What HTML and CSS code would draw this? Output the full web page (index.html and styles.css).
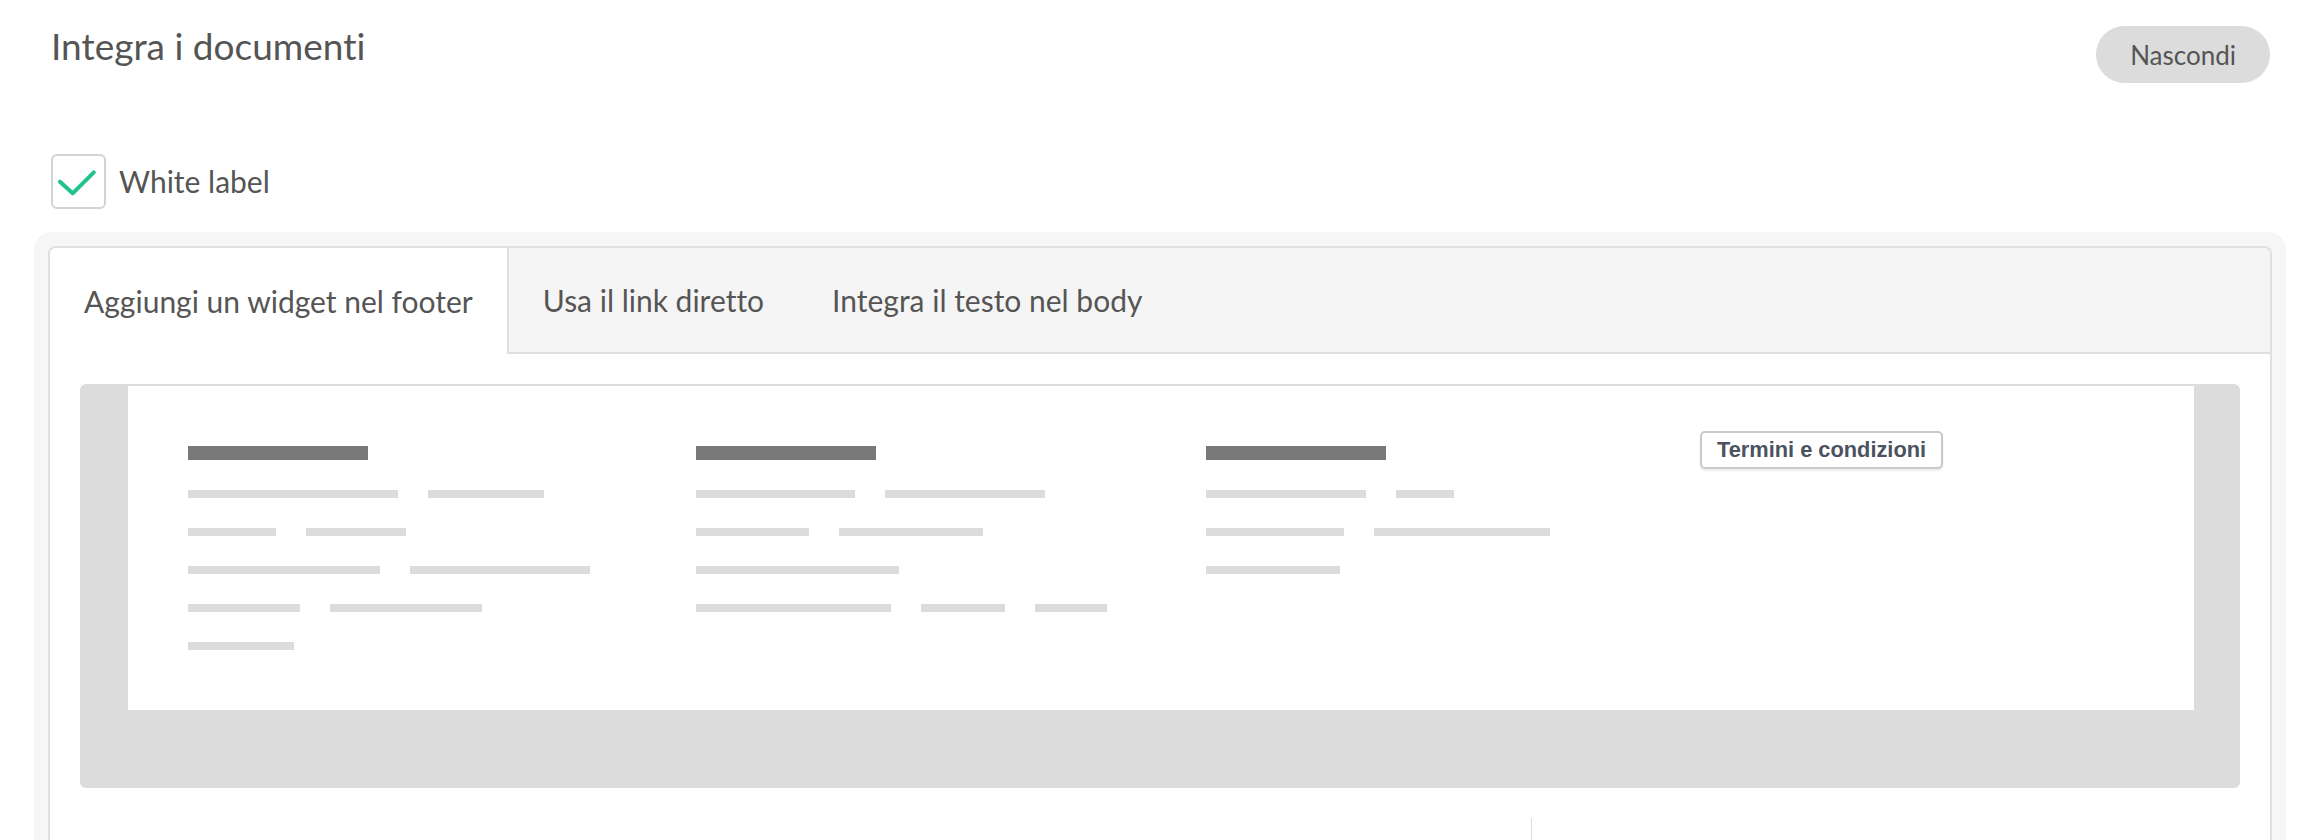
FILE: index.html
```html
<!DOCTYPE html>
<html lang="it">
<head>
<meta charset="utf-8">
<title>Integra i documenti</title>
<link rel="stylesheet" href="styles.css">
</head>
<body>
<div class="page">
  <header class="header">
    <h1 class="title">Integra i documenti</h1>
    <button class="hide-btn">Nascondi</button>
  </header>

  <label class="option">
    <span class="checkbox">
      <svg width="51" height="51" viewBox="0 0 51 51"><polyline points="7,25.7 19.7,37.3 40.8,16.3" fill="none" stroke="#1fc38b" stroke-width="4" stroke-linecap="round" stroke-linejoin="round"/></svg>
    </span>
    <span class="option-label">White label</span>
  </label>

  <section class="panel">
    <div class="card">
      <nav class="tabs">
        <div class="tab active">Aggiungi un widget nel footer</div>
        <div class="tab">Usa il link diretto</div>
        <div class="tab">Integra il testo nel body</div>
      </nav>
      <div class="card-body">
        <div class="preview">
          <div class="site">
            <div class="col">
              <div class="heading-bar"></div>
              <div class="row"><span class="seg" style="width:210px"></span><span class="seg" style="width:116px"></span></div>
              <div class="row"><span class="seg" style="width:88px"></span><span class="seg" style="width:100px"></span></div>
              <div class="row"><span class="seg" style="width:192px"></span><span class="seg" style="width:180px"></span></div>
              <div class="row"><span class="seg" style="width:112px"></span><span class="seg" style="width:152px"></span></div>
              <div class="row"><span class="seg" style="width:106px"></span></div>
            </div>
            <div class="col">
              <div class="heading-bar"></div>
              <div class="row"><span class="seg" style="width:159px"></span><span class="seg" style="width:160px"></span></div>
              <div class="row"><span class="seg" style="width:113px"></span><span class="seg" style="width:144px"></span></div>
              <div class="row"><span class="seg" style="width:203px"></span></div>
              <div class="row"><span class="seg" style="width:195px"></span><span class="seg" style="width:84px"></span><span class="seg" style="width:72px"></span></div>
            </div>
            <div class="col">
              <div class="heading-bar"></div>
              <div class="row"><span class="seg" style="width:160px"></span><span class="seg" style="width:58px"></span></div>
              <div class="row"><span class="seg" style="width:138px"></span><span class="seg" style="width:176px"></span></div>
              <div class="row"><span class="seg" style="width:134px"></span></div>
            </div>
            <div class="col-btn">
              <span class="terms-btn">Termini e condizioni</span>
            </div>
          </div>
        </div>
        <div class="below">
          <div class="below-left"></div>
          <div class="below-right"></div>
        </div>
      </div>
    </div>
  </section>
</div>
</body>
</html>
```
FILE: styles.css
```css
* { box-sizing: border-box; }

html, body {
  margin: 0;
  padding: 0;
  background: #ffffff;
  overflow: hidden;
}

body {
  font-family: "Lato", "Noto Sans", sans-serif;
  font-variant-ligatures: none;
  color: #555555;
}

.page {
  padding: 0 34px;
}

.header {
  display: flex;
  justify-content: space-between;
  align-items: flex-start;
  padding: 23px 16px 0 17px;
}

.title {
  margin: 0;
  font-size: 37px;
  line-height: 46px;
  font-weight: 400;
  color: #555555;
}

.hide-btn {
  margin-top: 3px;
  height: 57px;
  padding: 0 34px;
  border: none;
  border-radius: 29px;
  background: #dcdcdc;
  color: #555555;
  font-family: "Lato", "Noto Sans", sans-serif;
  font-size: 26px;
}

.option {
  display: flex;
  align-items: center;
  gap: 13px;
  margin: 71px 0 0 17px;
}

.checkbox {
  width: 55px;
  height: 55px;
  border: 2px solid #d2d3d9;
  border-radius: 6px;
  background: #fff;
  display: flex;
}

.option-label {
  font-size: 30px;
  color: #555555;
  padding-bottom: 2px;
}

.panel {
  margin-top: 23px;
  background: #f6f6f6;
  border-radius: 18px 18px 0 0;
  padding: 14px 14px 0;
}

.card {
  background: #ffffff;
  border: 2px solid #e0e0e0;
  border-bottom: none;
  border-radius: 8px 8px 0 0;
  min-height: 700px;
}

.tabs {
  display: flex;
  background: #f5f5f5;
  border-bottom: 2px solid #e0e0e0;
  border-radius: 6px 6px 0 0;
}

.tab {
  height: 104px;
  padding: 0 34px;
  display: flex;
  align-items: center;
  font-size: 30px;
  color: #555555;
  white-space: nowrap;
}

.tab.active {
  background: #ffffff;
  border-right: 2px solid #e0e0e0;
  border-top-left-radius: 6px;
  height: 106px;
  margin-bottom: -2px;
}

.card-body {
  padding: 30px 30px 0;
}

.preview {
  background: #dcdcdc;
  border-radius: 6px;
  padding: 2px 46px 78px 48px;
}

.site {
  background: #ffffff;
  height: 324px;
  padding: 45px 0 0 60px;
  display: grid;
  grid-template-columns: 508px 510px 494px auto;
  align-items: start;
}

.col {
  padding-top: 15px;
  display: flex;
  flex-direction: column;
  gap: 30px;
}

.heading-bar {
  width: 180px;
  height: 14px;
  background: #787878;
}

.row {
  display: flex;
  gap: 30px;
  height: 8px;
}

.seg {
  display: block;
  height: 8px;
  background: #dcdcdc;
}

.col-btn {
  display: flex;
}

.terms-btn {
  display: inline-block;
  height: 38px;
  padding: 0 15px;
  border: 2px solid #c9c9c9;
  border-radius: 5px;
  box-shadow: 0 2px 2px rgba(0, 0, 0, 0.08);
  font-family: "Liberation Sans", Arial, sans-serif;
  font-weight: 700;
  font-size: 21.8px;
  line-height: 34px;
  color: #4b5360;
  white-space: nowrap;
}

.below {
  display: grid;
  grid-template-columns: 1451px 1fr;
  margin-top: 30px;
  height: 200px;
}

.below-right {
  border-left: 1px solid #dddddd;
}
```
